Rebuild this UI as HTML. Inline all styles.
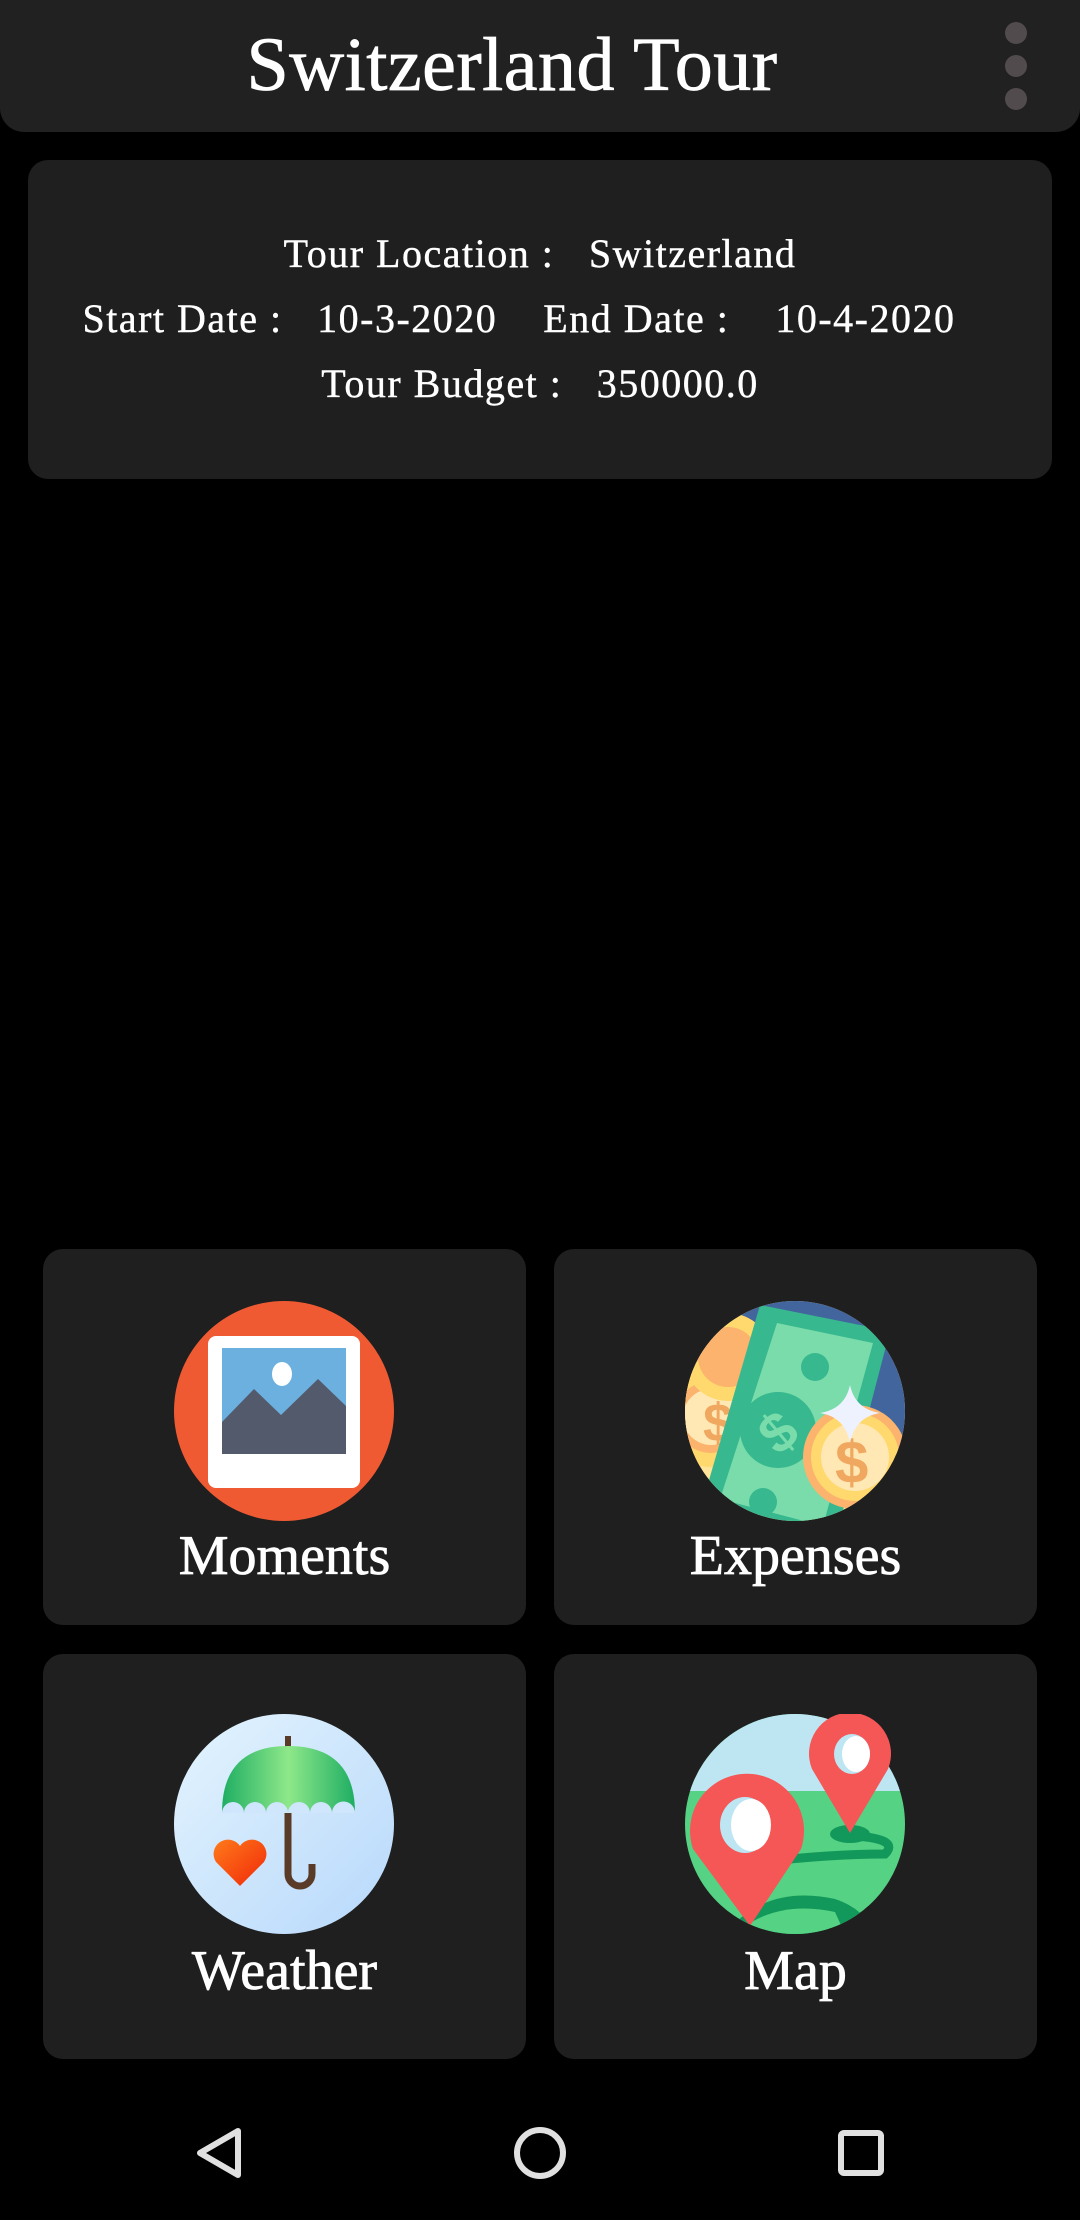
<!DOCTYPE html>
<html><head><meta charset="utf-8"><style>
*{margin:0;padding:0;box-sizing:border-box}
body{width:1080px;height:2220px;background:#000;position:relative;overflow:hidden;font-family:"Liberation Serif",serif;color:#fff}
.hdr{position:absolute;left:0;top:0;width:1080px;height:132px;background:#212121;border-radius:0 0 24px 24px}
.title{position:absolute;left:-28px;width:1080px;top:20px;text-align:center;font-size:76px;line-height:90px;letter-spacing:0.5px;-webkit-text-stroke:0.8px #fff}
.dot{position:absolute;left:1005px;width:22px;height:22px;border-radius:50%;background:#514b4d}
.info{position:absolute;left:28px;top:160px;width:1024px;height:319px;background:#1f1f1f;border-radius:20px}
.ln{position:absolute;left:0;width:1024px;text-align:center;font-size:40px;letter-spacing:1.5px;white-space:pre;-webkit-text-stroke:0.4px #fff}
.card{position:absolute;width:483px;background:#1f1f1f;border-radius:20px}
.ic{position:absolute;left:131px;width:220px;height:220px}
.lbl{position:absolute;left:0;width:483px;text-align:center;font-size:56px;line-height:60px;-webkit-text-stroke:0.8px #fff}
</style></head><body>
<div class="hdr">
<div class="title">Switzerland Tour</div>
<div class="dot" style="top:22px"></div><div class="dot" style="top:55px"></div><div class="dot" style="top:88px"></div>
</div>
<div class="info">
<div class="ln" style="top:70px">Tour Location :   Switzerland</div>
<div class="ln" style="top:135px;left:-21px">Start Date :   10-3-2020    End Date :    10-4-2020</div>
<div class="ln" style="top:200px">Tour Budget :   350000.0</div>
</div>

<div class="card" style="left:43px;top:1249px;height:376px">
<svg class="ic" style="top:52px" viewBox="0 0 220 220">
<circle cx="110" cy="110" r="110" fill="#f05a33"/>
<rect x="34" y="35" width="152" height="152" rx="8" fill="#fff"/>
<rect x="48" y="47" width="124" height="106" fill="#6cb0e0"/>
<polygon points="48,121 80,88 107,114 144,78 172,105 172,153 48,153" fill="#525a6b"/>
<ellipse cx="108" cy="73" rx="10" ry="12" fill="#fff"/>
</svg>
<div class="lbl" style="top:277px">Moments</div>
</div>

<div class="card" style="left:554px;top:1249px;height:376px">
<svg class="ic" style="top:52px" viewBox="0 0 220 220">
<defs><clipPath id="c1"><circle cx="110" cy="110" r="110"/></clipPath></defs>
<g clip-path="url(#c1)">
<rect width="220" height="220" fill="#ffe49a"/>
<circle cx="160" cy="60" r="120" fill="#41659c"/>
<circle cx="26" cy="116" r="50" fill="#ffd96d"/><circle cx="26" cy="116" r="36" fill="#fbb36e"/><circle cx="26" cy="116" r="28" fill="#ffe8b4"/>
<circle cx="43" cy="56" r="44" fill="#ffd96d"/><circle cx="43" cy="56" r="30" fill="#fbb36e"/>
<text x="18" y="140" font-size="54" font-family="Liberation Sans" font-weight="bold" fill="#f0a860">$</text>
<polygon points="75,4 205,30 150,240 15,210" fill="#37b88f"/>
<polygon points="92,22 188,42 138,225 35,198" fill="#79dcaa"/>
<circle cx="93" cy="129" r="38" fill="#37b88f"/>
<text x="76" y="150" font-size="56" font-family="Liberation Sans" font-weight="bold" fill="#79dcaa" transform="rotate(-40 93 129)">$</text>
<circle cx="130" cy="66" r="14" fill="#37b88f"/><circle cx="78" cy="201" r="14" fill="#37b88f"/>
<circle cx="170" cy="156" r="52" fill="#fbb36e"/><circle cx="170" cy="156" r="44" fill="#ffd96d"/><circle cx="170" cy="156" r="34" fill="#ffe8b4"/>
<text x="150" y="182" font-size="60" font-family="Liberation Sans" font-weight="bold" fill="#f0a860">$</text>
<path d="M165 84 Q170 108 195 112 Q170 116 165 142 Q160 116 135 112 Q160 108 165 84Z" fill="#eef2ff"/>
</g>
</svg>
<div class="lbl" style="top:277px">Expenses</div>
</div>

<div class="card" style="left:43px;top:1654px;height:405px">
<svg class="ic" style="top:60px" viewBox="0 0 220 220">
<defs><linearGradient id="g1" x1="0" y1="0" x2="1" y2="1"><stop offset="0" stop-color="#e4f4fe"/><stop offset="1" stop-color="#b7d8fb"/></linearGradient>
<linearGradient id="g2" x1="0" y1="0" x2="1" y2="0"><stop offset="0" stop-color="#1fae63"/><stop offset=".5" stop-color="#8ee88a"/><stop offset="1" stop-color="#1fae63"/></linearGradient>
<linearGradient id="g3" x1="0" y1="0" x2="1" y2="1"><stop offset="0" stop-color="#ff7a1a"/><stop offset="1" stop-color="#f0280a"/></linearGradient></defs>
<circle cx="110" cy="110" r="110" fill="url(#g1)"/>
<rect x="111" y="22" width="6" height="20" fill="#5a3b28"/>
<path d="M114 141 V160 a12 12 0 0 0 24 0 V150" stroke="#5a3b28" stroke-width="7" fill="none"/>
<path d="M48 99 Q48 32 114 32 Q181 32 181 99 Z" fill="url(#g2)"/>
<path d="M48 99 a11 11 0 0 1 22 0 a11 11 0 0 1 22 0 a11 11 0 0 1 22 0 a11 11 0 0 1 22 0 a11 11 0 0 1 22 0 a11 11 0 0 1 23 0Z" fill="#cfe6fd"/>
<path d="M114 99 V141" stroke="#5a3b28" stroke-width="7"/>
<path d="M66 172 L42 148 A13 13 0 0 1 66 132 A13 13 0 0 1 90 148 Z" fill="url(#g3)"/>
</svg>
<div class="lbl" style="top:287px">Weather</div>
</div>

<div class="card" style="left:554px;top:1654px;height:405px">
<svg class="ic" style="top:60px" viewBox="0 0 220 220">
<defs><clipPath id="c2"><circle cx="110" cy="110" r="110"/></clipPath></defs>
<g clip-path="url(#c2)">
<rect width="220" height="220" fill="#55d283"/>
<rect width="220" height="77" fill="#bde6f2"/>
<path d="M60 150 Q140 140 200 140 Q215 125 170 122" stroke="#12985a" stroke-width="9" fill="none"/>
<ellipse cx="165" cy="120" rx="20" ry="9" fill="#12985a"/>
<path d="M40 220 Q80 170 150 185 Q180 195 190 220Z" fill="#12985a"/>
<path d="M50 220 Q90 185 150 198 L160 220Z" fill="#55d283"/>
</g>
<path d="M165 119 L127 55 A41 41 0 1 1 203 55 Z" fill="#f55656"/>
<ellipse cx="167" cy="40" rx="18" ry="20" fill="#bde6f2"/><ellipse cx="171" cy="40" rx="14" ry="18" fill="#fff"/>
<g clip-path="url(#c2)">
<path d="M65 212 L8 135 A57 57 0 1 1 116 135 Z" fill="#f55656"/>
<ellipse cx="60" cy="111" rx="25" ry="28" fill="#bde6f2"/><ellipse cx="66" cy="111" rx="20" ry="26" fill="#fff"/>
</g>
</svg>
<div class="lbl" style="top:287px">Map</div>
</div>

<svg style="position:absolute;left:0;top:2110px" width="1080" height="90" viewBox="0 2110 1080 90">
<path d="M238 2131 L238 2175 L200 2153 Z" fill="none" stroke="#e0e0e0" stroke-width="6" stroke-linejoin="round"/>
<circle cx="540" cy="2153" r="23" fill="none" stroke="#e0e0e0" stroke-width="6"/>
<rect x="841" y="2133" width="40" height="40" rx="3" fill="none" stroke="#e0e0e0" stroke-width="6"/>
</svg>
</body></html>
